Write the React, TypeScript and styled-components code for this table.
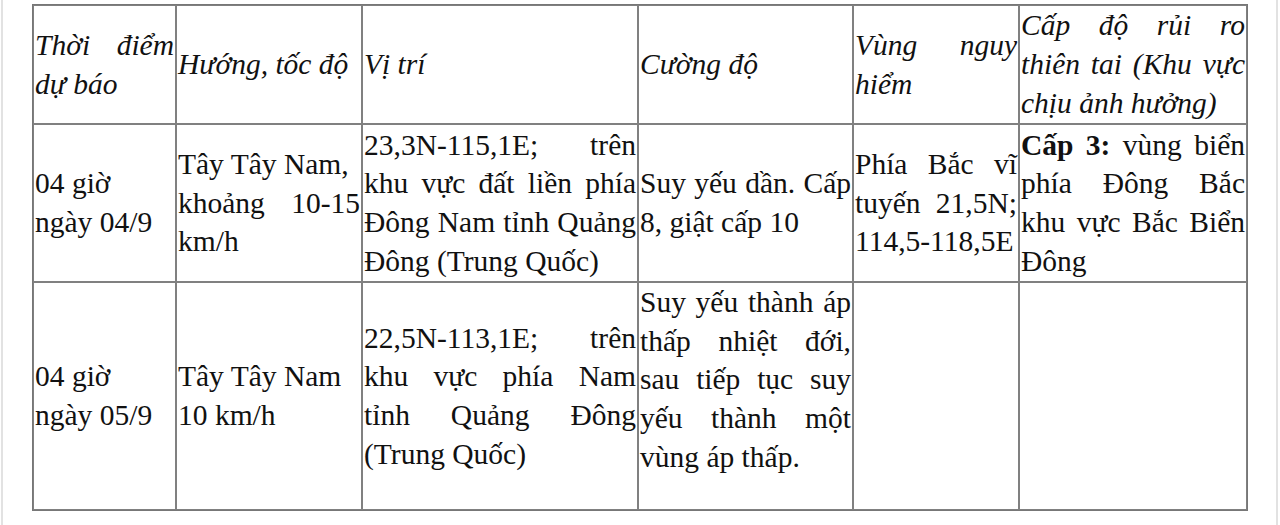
import styled, { createGlobalStyle } from 'styled-components'

const GlobalStyle = createGlobalStyle`
  html, body {
    margin: 0;
    padding: 0;
    background: #fff;
  }
`

interface LineProps {
  $fill?: boolean
}

// one printed line of a cell; justified lines stretch edge to edge
const Line = styled.span<LineProps>`
  display: block;
  text-align: left;
  ${({ $fill }) =>
    $fill &&
    `
    text-align: justify;
    text-align-last: justify;
  `}
`

const Page = styled.div`
  box-sizing: border-box;
  width: 1277px;
  min-height: 525px;
  margin-left: 1px;
  padding: 4px 0 0 29px;
  border-left: 2px solid #e2e2e2;
  border-right: 2px solid #e2e2e2;
  background: #fff;
`

const Table = styled.table`
  border-collapse: separate;
  border-spacing: 0;
  table-layout: fixed;
  width: 1216px;
  border: 1px solid #777;
  font-family: 'Liberation Serif', 'Times New Roman', serif;
  font-size: 29.5px;
  line-height: 38.7px;
  color: #111;
`

const Row = styled.tr<{ $h: number }>`
  height: ${({ $h }) => $h}px;
`

const Cell = styled.td<{ $top?: boolean }>`
  box-sizing: border-box;
  border: 1px solid #808080;
  padding: 0 1px;
  vertical-align: ${({ $top }) => ($top ? 'top' : 'middle')};
  overflow: hidden;
`

const HeadCell = styled(Cell).attrs({ as: 'th' })`
  font-style: italic;
  font-weight: normal;
  text-align: left;
`

const widths = [143, 186, 276, 215, 166, 228]

const App = () => (
  <Page>
    <GlobalStyle />
    <Table>
      <colgroup>
        {widths.map((w, i) => (
          <col key={i} style={{ width: w }} />
        ))}
      </colgroup>
      <thead>
        <Row $h={119}>
          <HeadCell>
            <Line $fill>Thời điểm</Line>
            <Line>dự báo</Line>
          </HeadCell>
          <HeadCell>
            <Line>Hướng, tốc độ</Line>
          </HeadCell>
          <HeadCell>
            <Line>Vị trí</Line>
          </HeadCell>
          <HeadCell>
            <Line>Cường độ</Line>
          </HeadCell>
          <HeadCell>
            <Line $fill>Vùng nguy</Line>
            <Line>hiểm</Line>
          </HeadCell>
          <HeadCell>
            <Line $fill>Cấp độ rủi ro</Line>
            <Line $fill>thiên tai (Khu vực</Line>
            <Line>chịu ảnh hưởng)</Line>
          </HeadCell>
        </Row>
      </thead>
      <tbody>
        <Row $h={158}>
          <Cell>
            <Line>04 giờ</Line>
            <Line>ngày 04/9</Line>
          </Cell>
          <Cell>
            <Line>Tây Tây Nam,</Line>
            <Line $fill>khoảng 10-15</Line>
            <Line>km/h</Line>
          </Cell>
          <Cell>
            <Line $fill>23,3N-115,1E; trên</Line>
            <Line $fill>khu vực đất liền phía</Line>
            <Line $fill>Đông Nam tỉnh Quảng</Line>
            <Line>Đông (Trung Quốc)</Line>
          </Cell>
          <Cell>
            <Line $fill>Suy yếu dần. Cấp</Line>
            <Line>8, giật cấp 10</Line>
          </Cell>
          <Cell>
            <Line $fill>Phía Bắc vĩ</Line>
            <Line $fill>tuyến 21,5N;</Line>
            <Line>114,5-118,5E</Line>
          </Cell>
          <Cell>
            <Line $fill>
              <b>Cấp 3:</b> vùng biển
            </Line>
            <Line $fill>phía Đông Bắc</Line>
            <Line $fill>khu vực Bắc Biển</Line>
            <Line>Đông</Line>
          </Cell>
        </Row>
        <Row $h={228}>
          <Cell>
            <Line>04 giờ</Line>
            <Line>ngày 05/9</Line>
          </Cell>
          <Cell>
            <Line>Tây Tây Nam</Line>
            <Line>10 km/h</Line>
          </Cell>
          <Cell>
            <Line $fill>22,5N-113,1E; trên</Line>
            <Line $fill>khu vực phía Nam</Line>
            <Line $fill>tỉnh Quảng Đông</Line>
            <Line>(Trung Quốc)</Line>
          </Cell>
          <Cell $top>
            <Line $fill>Suy yếu thành áp</Line>
            <Line $fill>thấp nhiệt đới,</Line>
            <Line $fill>sau tiếp tục suy</Line>
            <Line $fill>yếu thành một</Line>
            <Line>vùng áp thấp.</Line>
          </Cell>
          <Cell />
          <Cell />
        </Row>
      </tbody>
    </Table>
  </Page>
)

export default App
